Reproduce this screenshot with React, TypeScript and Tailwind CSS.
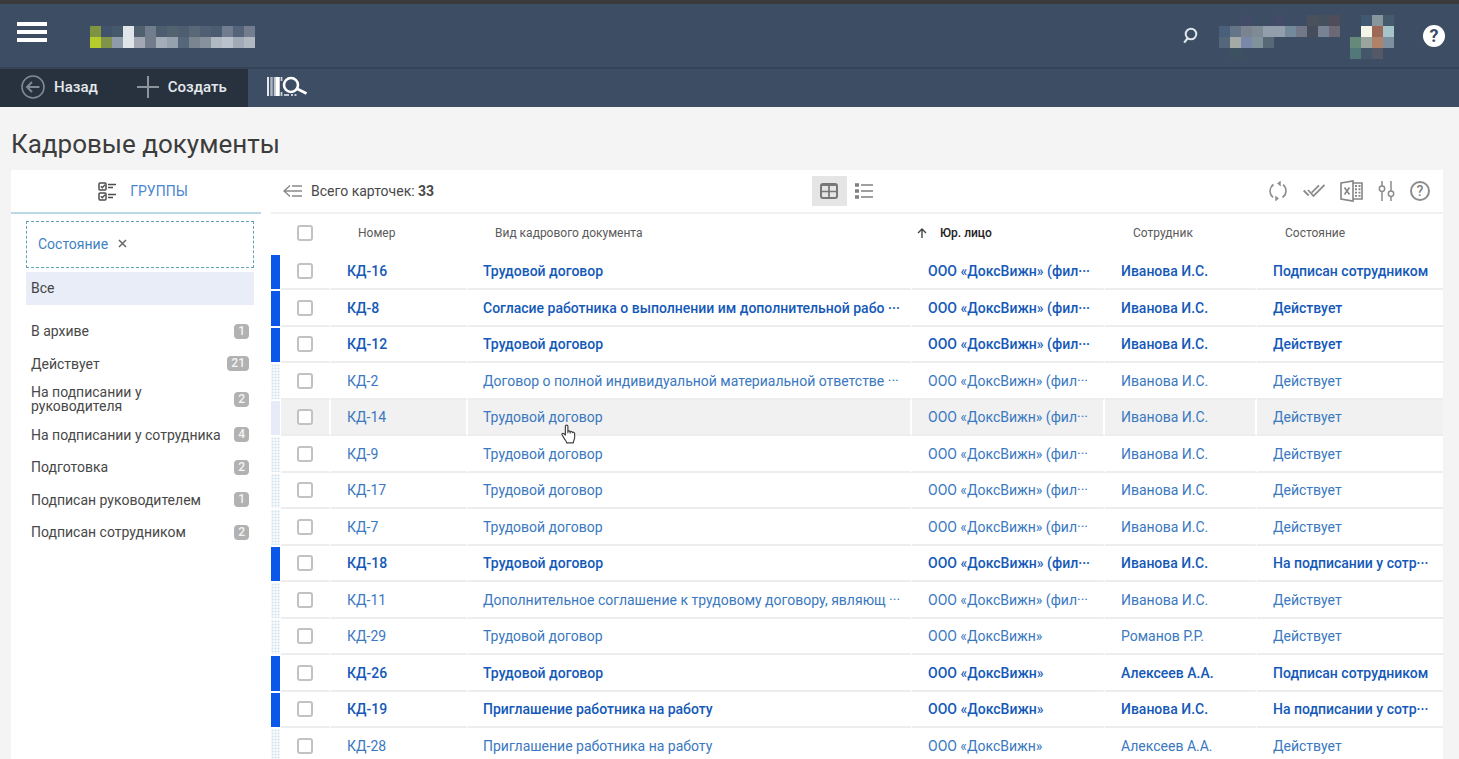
import React from "react";

type Doc = {
  num: string;
  kind: string;
  org: string;
  person: string;
  state: string;
  unread?: boolean;
  active?: boolean;
};

const ORG_CUT = "ООО «ДоксВижн» (фил···";
const ORG = "ООО «ДоксВижн»";

const docs: Doc[] = [
  { num: "КД-16", kind: "Трудовой договор", org: ORG_CUT, person: "Иванова И.С.", state: "Подписан сотрудником", unread: true },
  { num: "КД-8", kind: "Согласие работника о выполнении им дополнительной рабо ···", org: ORG_CUT, person: "Иванова И.С.", state: "Действует", unread: true },
  { num: "КД-12", kind: "Трудовой договор", org: ORG_CUT, person: "Иванова И.С.", state: "Действует", unread: true },
  { num: "КД-2", kind: "Договор о полной индивидуальной материальной ответстве ···", org: ORG_CUT, person: "Иванова И.С.", state: "Действует" },
  { num: "КД-14", kind: "Трудовой договор", org: ORG_CUT, person: "Иванова И.С.", state: "Действует", active: true },
  { num: "КД-9", kind: "Трудовой договор", org: ORG_CUT, person: "Иванова И.С.", state: "Действует" },
  { num: "КД-17", kind: "Трудовой договор", org: ORG_CUT, person: "Иванова И.С.", state: "Действует" },
  { num: "КД-7", kind: "Трудовой договор", org: ORG_CUT, person: "Иванова И.С.", state: "Действует" },
  { num: "КД-18", kind: "Трудовой договор", org: ORG_CUT, person: "Иванова И.С.", state: "На подписании у сотр···", unread: true },
  { num: "КД-11", kind: "Дополнительное соглашение к трудовому договору, являющ ···", org: ORG_CUT, person: "Иванова И.С.", state: "Действует" },
  { num: "КД-29", kind: "Трудовой договор", org: ORG, person: "Романов Р.Р.", state: "Действует" },
  { num: "КД-26", kind: "Трудовой договор", org: ORG, person: "Алексеев А.А.", state: "Подписан сотрудником", unread: true },
  { num: "КД-19", kind: "Приглашение работника на работу", org: ORG, person: "Иванова И.С.", state: "На подписании у сотр···", unread: true },
  { num: "КД-28", kind: "Приглашение работника на работу", org: ORG, person: "Алексеев А.А.", state: "Действует" },
];

const groups: [string, number][] = [
  ["В архиве", 1],
  ["Действует", 21],
  ["На подписании у руководителя", 2],
  ["На подписании у сотрудника", 4],
  ["Подготовка", 2],
  ["Подписан руководителем", 1],
  ["Подписан сотрудником", 2],
];

type Tile = [number, number, string];

const brandTiles: Tile[] = [
  [0, 0, "#7f9440"], [1, 0, "#40536a"], [2, 0, "#46586c"], [3, 0, "#dfe5e9"], [4, 0, "#51606f"], [5, 0, "#717d8d"],
  [6, 0, "#4c5d70"], [7, 0, "#53626f"], [8, 0, "#4e5d70"], [9, 0, "#5a6777"], [10, 0, "#505f73"], [11, 0, "#4c5c70"],
  [12, 0, "#717c8e"], [13, 0, "#54637a"], [14, 0, "#737d8f"],
  [0, 1, "#b5cc2c"], [1, 1, "#80934a"], [2, 1, "#8f9bab"], [3, 1, "#dfe5e9"], [4, 1, "#a2a9b4"], [5, 1, "#717d8d"],
  [6, 1, "#a5adb8"], [7, 1, "#95a1ac"], [8, 1, "#55677a"], [9, 1, "#7a858f"], [10, 1, "#85919d"], [11, 1, "#b0b8c1"],
  [12, 1, "#bac2ce"], [13, 1, "#a2abb5"], [14, 1, "#b0b8c1"],
];

const userTiles: Tile[] = [
  [2, 0, "#424b68"], [5, 0, "#444b68"], [8, 0, "#4a505c"], [9, 0, "#45505e"], [10, 0, "#514c59"],
  [0, 1, "#4a607a"], [1, 1, "#647588"], [2, 1, "#7a838f"], [3, 1, "#7e8a94"], [4, 1, "#929eac"], [5, 1, "#929eac"],
  [6, 1, "#74899a"], [7, 1, "#737888"], [8, 1, "#454d5c"], [9, 1, "#778394"], [10, 1, "#6c6875"],
  [0, 2, "#54667a"], [1, 2, "#a4aaa5"], [2, 2, "#7988a8"], [3, 2, "#80929a"], [4, 2, "#586877"],
  [1, 3, "#3d5260"],
];

const avatarTiles: Tile[] = [
  [1, 0, "#405870"], [2, 0, "#87959d"], [3, 0, "#455a6c"],
  [1, 1, "#f3f5e8"], [2, 1, "#9b6955"], [3, 1, "#a6c5ca"],
  [0, 2, "#66897a"], [1, 2, "#9aa5a0"], [2, 2, "#b0826a"], [3, 2, "#7e90a0"],
  [0, 3, "#52787a"], [1, 3, "#43566a"], [2, 3, "#545867"],
];

function Mosaic({ tiles, cols, rows, label }: { tiles: Tile[]; cols: number; rows: number; label: string }) {
  return (
    <svg width={cols * 11} height={rows * 11} role="img" aria-label={label} shapeRendering="crispEdges">
      {tiles.map(([x, y, c]) => (
        <rect key={`${x}-${y}`} x={x * 11} y={y * 11} width={11} height={11} fill={c} />
      ))}
    </svg>
  );
}

function Check({ label }: { label: string }) {
  return (
    <input
      type="checkbox"
      aria-label={label}
      className="block size-4 appearance-none rounded-[3px] border-2 border-[#c2c2c2] bg-white checked:bg-[#0a58ea]"
    />
  );
}

function HandCursor() {
  return (
    <svg width="16" height="20" viewBox="0 0 16 20" className="pointer-events-none absolute left-[93px] top-[24px] z-10" aria-hidden="true">
      <path
        d="M4.4 11V2.6c0-1.9 2.5-1.9 2.5 0V7.6c.3-1 2.2-.9 2.3.4.5-.9 2.1-.7 2.2.6.6-.7 2.2-.4 2.2 1v4.2c0 2-1.3 3-1.3 5H5.6c0-1.6-1.2-2.3-2.3-4.2L1.200 11c-.7-1.3.8-2.3 1.900-1.200z"
        fill="#fff"
        stroke="#444"
        strokeWidth="1.2"
        strokeLinejoin="round"
      />
      <path d="M6.9 7.6v1.8M9.2 8v1.6" stroke="#444" strokeWidth="1" />
    </svg>
  );
}

function Header() {
  return (
    <header className="flex h-[67px] items-start border-t-4 border-[#3a3a3a] bg-[#3d4d63] pl-[17px] pr-[14px]">
      <button aria-label="Меню" className="mt-[18px] flex w-[30px] flex-col gap-1">
        <span className="h-1 w-full bg-white" />
        <span className="h-1 w-full bg-white" />
        <span className="h-1 w-full bg-white" />
      </button>
      <div className="ml-[43px] mt-[22px]">
        <Mosaic tiles={brandTiles} cols={15} rows={2} label="Логотип" />
      </div>
      <div className="ml-auto flex items-start">
        <button aria-label="Поиск" className="mr-[21px] mt-[23px]">
          <svg width="16" height="18" viewBox="0 0 16 18" fill="none" stroke="#dfe5eb" strokeWidth="2">
            <circle cx="9" cy="7" r="5.3" />
            <path d="M5.800 11l-3.600 4.600" strokeWidth="2.200" />
          </svg>
        </button>
        <div className="mt-[11px]">
          <Mosaic tiles={userTiles} cols={11} rows={4} label="Пользователь" />
        </div>
        <div className="ml-[10px] mr-[29px] mt-[11px]">
          <Mosaic tiles={avatarTiles} cols={4} rows={4} label="Фото" />
        </div>
        <button aria-label="Справка" className="mt-[21px] flex size-[22px] items-center justify-center rounded-full bg-white text-lg font-bold text-[#3d4d63]">
          ?
        </button>
      </div>
    </header>
  );
}

function ActionBar() {
  return (
    <nav className="flex h-[40px] border-t-2 border-[#344358] bg-[#3d4d63]">
      <div className="flex w-[248px] items-center bg-[#28323f] pb-[2px] pl-[21px] text-[15px] font-medium text-[#e6e9ec]">
        <button className="flex items-center gap-[9px]">
          <svg width="24" height="24" viewBox="0 0 24 24" fill="none" stroke="#7f8893" strokeWidth="1.600">
            <circle cx="12" cy="12" r="11" />
            <path d="M18.500 12H6.500M11 7l-5 5 5 5" strokeWidth="2" />
          </svg>
          Назад
        </button>
        <button className="ml-[39px] flex items-center gap-[9px]">
          <svg width="22" height="22" viewBox="0 0 22 22" stroke="#8b939c" strokeWidth="2">
            <path d="M11 0v22M0 11h22" />
          </svg>
          Создать
        </button>
      </div>
      <button aria-label="Поиск по штрихкоду" className="ml-[19px] pb-[2px]">
        <svg width="41" height="22" viewBox="0 0 41 22" fill="none">
          <path d="M1 1v19" stroke="#e4e8ee" strokeWidth="2" />
          <path d="M4.500 1v19" stroke="#aab3c0" strokeWidth="2.500" />
          <path d="M7.300 1v19" stroke="#dfe3e9" strokeWidth="1" />
          <path d="M10.500 1v19" stroke="#fff" strokeWidth="4.500" />
          <path d="M14.500 1v4M14.500 16v4" stroke="#cdd3da" strokeWidth="1.800" />
          <path d="M17 19h5M24 19h2M27.500 19h2" stroke="#c3cad3" strokeWidth="1.800" />
          <circle cx="24" cy="9" r="7" stroke="#fff" strokeWidth="2.600" />
          <path d="M29.500 12.500l10 5" stroke="#fff" strokeWidth="2.600" />
        </svg>
      </button>
    </nav>
  );
}

function Sidebar() {
  return (
    <aside className="w-[250px] shrink-0">
      <button className="flex h-[44px] w-full items-center justify-center gap-[14px] border-b-2 border-[#bcd7e5] pl-[14px] text-sm text-[#4a86cf]">
        <svg width="18" height="19" viewBox="0 0 18 19" fill="none" stroke="#4d4d4d" strokeWidth="1.500">
          <rect x="1" y="1" width="7" height="7" rx="1" />
          <rect x="1" y="11" width="7" height="7" rx="1" />
          <path d="M2.800 4.300l1.500 1.500 2.700-3M2.800 14.300l1.500 1.500 2.700-3" strokeWidth="1.300" />
          <path d="M10 2.500h8M10 5.500h5M10 12.500h8M10 15.500h5" strokeWidth="1.700" />
        </svg>
        ГРУППЫ
      </button>
      <div className="pl-[15px] pr-[7px] pt-[7px]">
        <div className="flex h-[47px] items-center gap-[10px] border border-dashed border-[#5fa3b5] pb-[2px] pl-[11px] text-sm text-[#3f83c2]">
          Состояние
          <button aria-label="Убрать группировку">
            <svg width="9" height="9" viewBox="0 0 9 9" stroke="#666" strokeWidth="1.500">
              <path d="M1 1l7 7M8 1l-7 7" />
            </svg>
          </button>
        </div>
        <button className="mt-1 block h-[33px] w-full bg-[#e8edf8] pb-[2px] pl-[5px] text-left text-sm text-[#444]">Все</button>
        <ul className="mt-[10px]">
          {groups.map(([name, count]) => (
            <li key={name} className="flex odd:min-h-8 even:min-h-[33px]">
              <button className="flex flex-1 items-center justify-between px-[5px] py-[5px] text-left text-sm leading-[14px] text-[#484848]">
                <span className="max-w-[190px]">{name}</span>
                <span className="rounded-[4px] bg-[#b2b2b2] px-1 text-xs font-medium leading-[15px] text-[#f4f4f4]">{count}</span>
              </button>
            </li>
          ))}
        </ul>
      </div>
    </aside>
  );
}

function ListToolbar() {
  return (
    <div className="flex h-[44px] items-center border-b-2 border-[#f1f1f1] pl-3 pr-[13px] text-sm text-[#484848]">
      <div className="flex flex-1 items-center gap-2">
        <button aria-label="Свернуть панель">
          <svg width="20" height="14" viewBox="0 0 20 14" fill="none" stroke="#8a8a8a" strokeWidth="1.500">
            <path d="M7 1.500L1 7l6 5.500M1 7h18M9 2h10M9 12h10" />
          </svg>
        </button>
        <span>
          Всего карточек: <b className="font-bold">33</b>
        </span>
      </div>
      <div className="flex">
        <button aria-label="Таблица" className="flex h-[30px] w-[35px] items-center justify-center bg-[#e5e5e5]">
          <svg width="18" height="16" viewBox="0 0 18 16" fill="none" stroke="#777" strokeWidth="2">
            <rect x="1" y="1" width="16" height="14" rx="2" />
            <path d="M9 1v14M1 8.500h16" strokeWidth="1.700" />
            <path d="M1 2h16" />
          </svg>
        </button>
        <button aria-label="Список" className="flex h-[30px] w-[35px] items-center justify-center">
          <svg width="18" height="16" viewBox="0 0 18 16" stroke="#808080" strokeWidth="2">
            <path d="M6 2h12M6 8h12M6 14h12" strokeWidth="1.600" />
            <path d="M0 2h4M0 8h4M0 14h4" strokeWidth="3.400" />
          </svg>
        </button>
      </div>
      <div className="flex flex-1 items-center justify-end gap-[15px] pl-5">
        <button aria-label="Обновить">
          <svg width="20" height="20" viewBox="0 0 20 20" fill="none" stroke="#8c8c8c" strokeWidth="1.600">
            <path d="M5.500 3.500A8 8 0 0 0 5 16.300M14.500 16.500A8 8 0 0 0 15 3.700" />
            <path d="M9.500 2.300h2.500M12.500 0v5l-3-2.500zM10.500 17.700H8M7.500 15v5l3-2.500z" fill="#8c8c8c" strokeWidth=".5" />
          </svg>
        </button>
        <button aria-label="Отметить прочитанными">
          <svg width="22" height="14" viewBox="0 0 22 14" fill="none" stroke="#8c8c8c" strokeWidth="1.800">
            <path d="M.7 6.500l5 5M5 6l5.500 6L21.500 1M8.700 8.700L16 1.300" />
          </svg>
        </button>
        <button aria-label="Экспорт в Excel">
          <svg width="23" height="22" viewBox="0 0 23 22" fill="none" stroke="#858585" strokeWidth="1.600">
            <path d="M1 3L13 .9v20.200L1 19z" />
            <path d="M4.500 7.500l5 7M9.500 7.500l-5 7" />
            <path d="M13 3h9v16h-9" />
            <path d="M15 6h2M18.500 6h2M15 9.300h2M18.500 9.300h2M15 12.600h2M18.500 12.600h2M15 15.900h2M18.500 15.900h2" strokeWidth="1.900" />
          </svg>
        </button>
        <button aria-label="Настройки">
          <svg width="17" height="20" viewBox="0 0 17 20" fill="none" stroke="#8c8c8c" strokeWidth="1.500">
            <path d="M4 0v5M4 10.500V20M13 0v10M13 15.500V20" />
            <circle cx="4" cy="7.700" r="2.700" />
            <circle cx="13" cy="12.700" r="2.700" />
          </svg>
        </button>
        <button aria-label="Помощь" className="flex size-5 items-center justify-center rounded-full border-2 border-[#8c8c8c] text-sm font-medium text-[#808080]">
          ?
        </button>
      </div>
    </div>
  );
}

const edge = "border-r-2 border-b-2 border-r-white border-b-[#ededed]";

function DocTable() {
  return (
    <table className="w-full table-fixed border-separate border-spacing-0 text-left text-sm">
      <colgroup>
        <col className="w-[10px]" />
        <col className="w-[50px]" />
        <col className="w-[137px]" />
        <col />
        <col className="w-[193px]" />
        <col className="w-[152px]" />
        <col className="w-[186px]" />
      </colgroup>
      <thead>
        <tr className="h-[40px] text-xs text-[#5a5a5a]">
          <td />
          <th className="pb-[3px] pl-4"><Check label="Выбрать все" /></th>
          <th className="pb-[3px] pl-[27px] font-normal">Номер</th>
          <th className="pb-[3px] pl-[27px] font-normal">Вид кадрового документа</th>
          <th className="pb-[3px] pl-[5px] font-medium text-[#222]">
            <button className="flex items-center gap-[13px]">
              <svg width="10" height="10" viewBox="0 0 10 10" fill="none" stroke="#444" strokeWidth="1.400">
                <path d="M5 10V1M1 5l4-4 4 4" />
              </svg>
              Юр. лицо
            </button>
          </th>
          <th className="pb-[3px] pl-7 font-normal">Сотрудник</th>
          <th className="pb-[3px] pl-7 font-normal">Состояние</th>
        </tr>
      </thead>
      <tbody>
        {docs.map((d) => (
          <tr
            key={d.num}
            className={`whitespace-nowrap odd:h-[36px] even:h-[37px] ${d.unread ? "font-medium text-[#1459b8]" : "text-[#3a78bf]"} ${d.active ? "bg-[#f1f1f1]" : ""}`}
          >
            <td
              className={`border-y border-r border-white p-0 ${
                d.unread
                  ? "bg-[#0a58ea]"
                  : d.active
                    ? "bg-[#e6ebf7]"
                    : "bg-[#f6fafc] bg-[radial-gradient(#d3e3ee_30%,transparent_60%)] bg-[length:3px_3px]"
              }`}
            />
            <td className={`${edge} p-0 pl-4`}><Check label={`Выбрать ${d.num}`} /></td>
            <td className={`${edge} p-0 pl-4`}><a href="#">{d.num}</a></td>
            <td className={`${edge} relative p-0 pl-[15px]`}>
              <a href="#">{d.kind}</a>
              {d.active && <HandCursor />}
            </td>
            <td className={`${edge} p-0 pl-4`}>{d.org}</td>
            <td className={`${edge} p-0 pl-4`}>{d.person}</td>
            <td className="border-b-2 border-b-[#ededed] p-0 pl-4">{d.state}</td>
          </tr>
        ))}
      </tbody>
    </table>
  );
}

export default function App() {
  return (
    <div className="h-screen overflow-hidden bg-[#f4f4f4] font-['Roboto',sans-serif]">
      <Header />
      <ActionBar />
      <main className="pl-[11px] pr-4">
        <h1 className="pb-[10px] pt-[21px] text-[26px] leading-8 text-[#3c3c3c]">Кадровые документы</h1>
        <div className="flex min-h-screen gap-[10px] bg-white">
          <Sidebar />
          <section className="min-w-0 flex-1">
            <ListToolbar />
            <DocTable />
          </section>
        </div>
      </main>
    </div>
  );
}
